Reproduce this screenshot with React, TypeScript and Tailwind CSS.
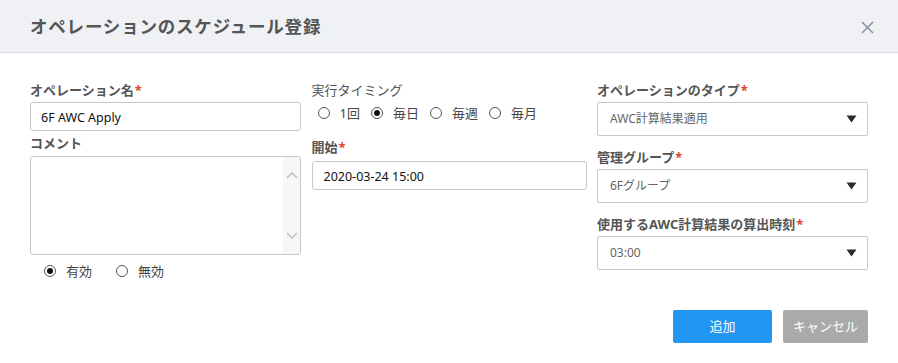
import React, { useState } from 'react';

// Types
interface RadioProps {
  label: string;
  checked: boolean;
  onSelect: () => void;
}

interface SelectBoxProps {
  value: string;
}

// Constants
const TIMINGS = ['1回', '毎日', '毎週', '毎月'];

const Radio: React.FC<RadioProps> = ({ label, checked, onSelect }) => (
  <button type="button" onClick={onSelect} className="flex items-center h-[18px]">
    <span className="w-[12px] h-[12px] rounded-full border border-[#555] bg-white flex items-center justify-center">
      {checked && <span className="w-[6px] h-[6px] rounded-full bg-[#111]" />}
    </span>
    <span className="ml-[10px] text-[13px] text-[#444] leading-[18px]">{label}</span>
  </button>
);

const Label: React.FC<{ text: string; required?: boolean; bold?: boolean }> = ({
  text,
  required = false,
  bold = true
}) => (
  <div className={`h-[18px] leading-[18px] text-[13px] text-[#555] ${bold ? 'font-bold' : ''}`}>
    {text}
    {required && <span className="text-[#e0442e] ml-[1px]">*</span>}
  </div>
);

const SelectBox: React.FC<SelectBoxProps> = ({ value }) => (
  <div className="h-[34px] border border-[#c8c8c8] rounded-[2px] bg-white flex items-center justify-between pl-[12px] pr-[10px]">
    <span className="text-[12px] text-[#666]">{value}</span>
    <svg width="11" height="8" viewBox="0 0 11 8">
      <path d="M0.5 0.5 L10.5 0.5 L5.5 7.5 Z" fill="#2b2b2b" />
    </svg>
  </div>
);

function App() {
  const [name, setName] = useState('6F AWC Apply');
  const [comment, setComment] = useState('');
  const [enabled, setEnabled] = useState(true);
  const [timing, setTiming] = useState('毎日');
  const [start, setStart] = useState('2020-03-24 15:00');

  return (
    <div className="w-[898px] h-[363px] bg-white font-['Noto_Sans','Noto_Sans_CJK_JP',sans-serif] overflow-hidden">
      {/* Header */}
      <div className="h-[53px] bg-[#f0f1f5] border-b border-[#dcdde2] flex items-center justify-between pl-[30px] pr-[23px]">
        <h2 className="text-[17.5px] font-bold text-[#555] tracking-[0.8px] pt-[1px]">
          オペレーションのスケジュール登録
        </h2>
        <button type="button" className="w-[16px] h-[16px] flex items-center justify-center mt-[2px]">
          <svg width="13" height="13" viewBox="0 0 13 13">
            <path d="M1 1 L12 12 M12 1 L1 12" stroke="#8d92a3" strokeWidth="1.6" />
          </svg>
        </button>
      </div>

      {/* Body */}
      <div className="px-[30px] pt-[28px] grid grid-cols-[271px_275px_271px] gap-x-[10.5px]">
        {/* Column 1 */}
        <div className="flex flex-col">
          <Label text="オペレーション名" required />
          <input
            value={name}
            onChange={(e) => setName(e.target.value)}
            className="mt-[3px] h-[29px] border border-[#c8c8c8] rounded-[3px] px-[10px] pt-[2px] text-[12.5px] text-[#111] outline-none"
          />
          <div className="mt-[3px]">
            <Label text="コメント" />
          </div>
          <div className="mt-[4px] h-[99px] border border-[#c8c8c8] rounded-[3px] flex overflow-hidden">
            <textarea
              value={comment}
              onChange={(e) => setComment(e.target.value)}
              className="flex-1 resize-none outline-none px-[8px] py-[4px] text-[12.5px]"
            />
            <div className="w-[17px] bg-[#f7f7f7] flex flex-col items-center justify-between py-[14px]">
              <svg width="12" height="8" viewBox="0 0 12 8">
                <path d="M1 7 L6 2 L11 7" stroke="#c2c2c2" strokeWidth="1.6" fill="none" />
              </svg>
              <svg width="12" height="8" viewBox="0 0 12 8">
                <path d="M1 1 L6 6 L11 1" stroke="#c2c2c2" strokeWidth="1.6" fill="none" />
              </svg>
            </div>
          </div>
          <div className="mt-[7px] pl-[14px] flex items-center gap-[24px]">
            <Radio label="有効" checked={enabled} onSelect={() => setEnabled(true)} />
            <Radio label="無効" checked={!enabled} onSelect={() => setEnabled(false)} />
          </div>
        </div>

        {/* Column 2 */}
        <div className="flex flex-col">
          <Label text="実行タイミング" bold={false} />
          <div className="mt-[5px] pl-[6px] flex items-center gap-[11px]">
            {TIMINGS.map((t) => (
              <Radio key={t} label={t} checked={timing === t} onSelect={() => setTiming(t)} />
            ))}
          </div>
          <div className="mt-[16px]">
            <Label text="開始" required />
          </div>
          <input
            value={start}
            onChange={(e) => setStart(e.target.value)}
            className="mt-[5px] h-[29px] border border-[#c8c8c8] rounded-[3px] px-[11px] pt-[2px] text-[12.5px] text-[#111] outline-none"
          />
        </div>

        {/* Column 3 */}
        <div className="flex flex-col">
          <Label text="オペレーションのタイプ" required />
          <div className="mt-[3px]">
            <SelectBox value="AWC計算結果適用" />
          </div>
          <div className="mt-[12px]">
            <Label text="管理グループ" required />
          </div>
          <div className="mt-[3px]">
            <SelectBox value="6Fグループ" />
          </div>
          <div className="mt-[12px]">
            <Label text="使用するAWC計算結果の算出時刻" required />
          </div>
          <div className="mt-[3px]">
            <SelectBox value="03:00" />
          </div>
        </div>
      </div>

      {/* Footer */}
      <div className="mt-[30px] pr-[30px] flex justify-end gap-[11px]">
        <button type="button" className="w-[99px] h-[33px] rounded-[2px] bg-[#2196f3] text-white text-[13px]">
          追加
        </button>
        <button type="button" className="w-[85px] h-[33px] rounded-[2px] bg-[#aaaaaa] text-white text-[13px]">
          キャンセル
        </button>
      </div>
    </div>
  );
}

export default App;
